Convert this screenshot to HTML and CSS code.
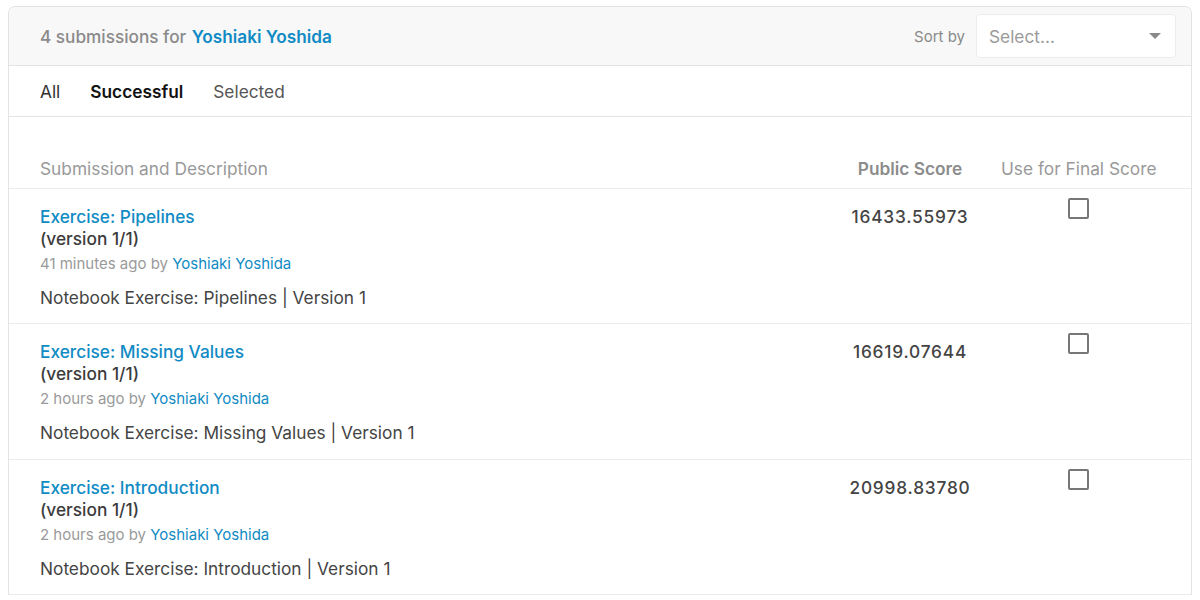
FILE: index.html
```html
<!DOCTYPE html>
<html>
<head>
<meta charset="utf-8">
<link rel="stylesheet" href="styles.css">
</head>
<body>
<div class="panel">
  <div class="header">
    <div class="title"><span class="count">4 submissions for</span> <a class="user" href="#">Yoshiaki Yoshida</a></div>
    <div class="sort">
      <span class="sort-label">Sort by</span>
      <div class="select"><span>Select...</span><span class="caret"></span></div>
    </div>
  </div>
  <div class="tabs">
    <span class="tab">All</span>
    <span class="tab active">Successful</span>
    <span class="tab muted">Selected</span>
  </div>
  <div class="table">
    <div class="thead">
      <div class="c-desc">Submission and Description</div>
      <div class="c-score strong">Public Score</div>
      <div class="c-final">Use for Final Score</div>
    </div>
    <div class="row">
      <div class="c-desc">
        <a class="sub-title" href="#">Exercise: Pipelines</a>
        <div class="version">(version 1/1)</div>
        <div class="meta">41 minutes ago by <a href="#">Yoshiaki Yoshida</a></div>
        <div class="desc">Notebook Exercise: Pipelines | Version 1</div>
      </div>
      <div class="c-score score">16433.55973</div>
      <div class="c-final"><span class="checkbox"></span></div>
    </div>
    <div class="row">
      <div class="c-desc">
        <a class="sub-title" href="#">Exercise: Missing Values</a>
        <div class="version">(version 1/1)</div>
        <div class="meta">2 hours ago by <a href="#">Yoshiaki Yoshida</a></div>
        <div class="desc">Notebook Exercise: Missing Values | Version 1</div>
      </div>
      <div class="c-score score">16619.07644</div>
      <div class="c-final"><span class="checkbox"></span></div>
    </div>
    <div class="row">
      <div class="c-desc">
        <a class="sub-title" href="#">Exercise: Introduction</a>
        <div class="version">(version 1/1)</div>
        <div class="meta">2 hours ago by <a href="#">Yoshiaki Yoshida</a></div>
        <div class="desc">Notebook Exercise: Introduction | Version 1</div>
      </div>
      <div class="c-score score">20998.83780</div>
      <div class="c-final"><span class="checkbox"></span></div>
    </div>
  </div>
</div>
</body>
</html>
```
FILE: styles.css
```css
* { box-sizing: border-box; }
html, body { margin: 0; padding: 0; background: #fff; }
body {
  font-family: Inter, "Noto Sans", "Liberation Sans", sans-serif;
  color: #3c3c3c;
  height: 600px;
  overflow: hidden;
}
a { text-decoration: none; color: #118bc4; }

.panel {
  margin: 6px 8px 0 8px;
  border: 1px solid #e3e3e3;
  border-bottom: none;
  border-radius: 7px 7px 0 0;
  overflow: hidden;
}

.header {
  height: 59px;
  background: #f8f8f8;
  border-bottom: 1px solid #e3e3e3;
  display: flex;
  align-items: center;
  justify-content: space-between;
  padding: 0 15px 0 31px;
}
.title { font-size: 17.2px; font-weight: 500; }
.count { color: #8a8a8a; }
.user { font-weight: 600; margin-left: 1px; }

.sort { display: flex; align-items: center; gap: 11px; }
.sort-label { font-size: 15px; color: #8a8a8a; }
.select {
  width: 200px;
  height: 44px;
  background: #fff;
  border: 1px solid #ececec;
  border-radius: 4px;
  display: flex;
  align-items: center;
  justify-content: space-between;
  padding: 0 14px 0 12px;
  font-size: 17.3px;
  color: #9a9a9a;
}
.caret {
  width: 0; height: 0;
  border-left: 6px solid transparent;
  border-right: 6px solid transparent;
  border-top: 6px solid #8a8a8a;
}

.tabs {
  height: 51px;
  border-bottom: 1px solid #e3e3e3;
  display: flex;
  align-items: center;
  gap: 30px;
  padding-left: 31px;
  font-size: 17.3px;
}
.tab { color: #333; }
.tab.active { color: #111; font-weight: 600; }
.tab.muted { color: #555; }

.table { padding-top: 41px; }
.thead, .row {
  display: flex;
  align-items: flex-start;
  padding: 0 35px 0 31px;
  border-bottom: 1px solid #ebebeb;
}
.thead {
  height: 31px;
  font-size: 17.3px;
  color: #999;
}
.thead .strong { color: #8c8c8c; font-weight: 600; }
.c-desc { flex: 1; }
.c-score { width: 140px; text-align: center; }
.c-final { width: 155px; margin-left: 21px; text-align: center; }
.thead .c-final { white-space: nowrap; }

.row { padding-top: 17px; padding-bottom: 14px; font-size: 17.3px; }
.row:nth-child(3) { padding-bottom: 15px; }
.sub-title { display: block; line-height: 22px; font-weight: 500; }
.version { line-height: 22px; font-weight: 500; color: #3c3c3c; }
.meta { margin-top: 3px; line-height: 22px; font-size: 15px; color: #9a9a9a; }
.desc { margin-top: 12px; line-height: 22px; color: #444; }
.score { line-height: 22px; font-weight: 500; color: #444; letter-spacing: 0.8px; }
.checkbox {
  display: inline-block;
  width: 21px; height: 21px;
  border: 2px solid #777;
  border-radius: 2px;
  margin-top: -8px;
  vertical-align: top;
}
```
